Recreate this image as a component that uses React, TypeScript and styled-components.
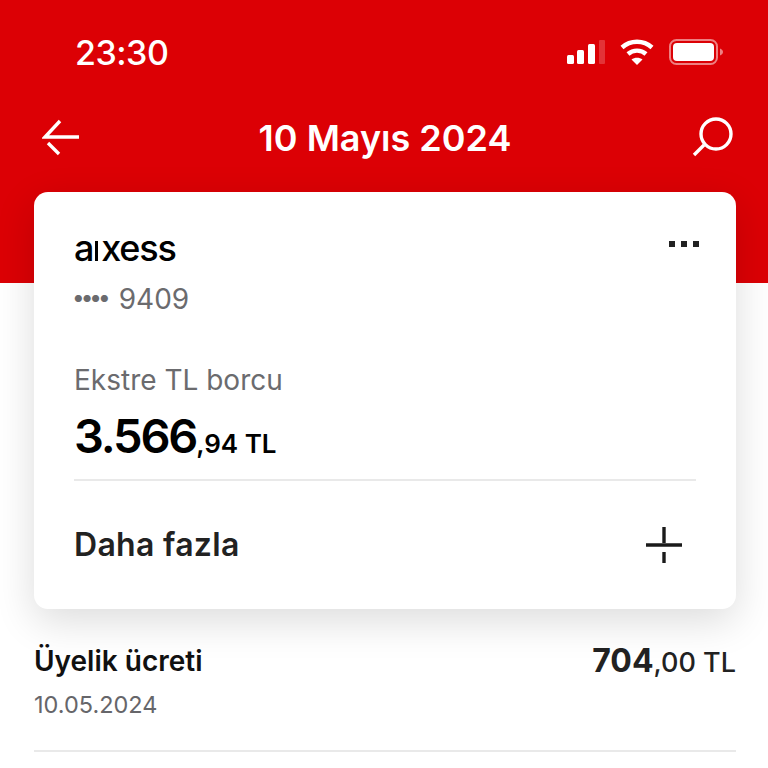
import React from 'react';
import styled, { createGlobalStyle } from "styled-components";

const GlobalStyle = createGlobalStyle`
    html, body {
        margin: 0;
        padding: 0;
        background: #fff;
        font-family: "Inter", "Liberation Sans", sans-serif;
    }
`

const Screen = styled.div`
    width: 768px;
    height: 768px;
    overflow: hidden;
    background: #fff;
`
const Header = styled.header`
    height: 283px;
    background: #dc0005;
    box-sizing: border-box;
    padding-top: 31px;
    color: #fff;
`
const StatusBar = styled.div`
    height: 42px;
    display: flex;
    align-items: center;
    justify-content: space-between;
    padding: 0 44px 0 75px;
`
const Time = styled.span`
    font-size: 34px;
    font-weight: 500;
    letter-spacing: -0.5px;
`
const StatusIcons = styled.div`
    display: flex;
    align-items: center;
    gap: 15px;
`
const NavBar = styled.nav`
    margin-top: 43px;
    height: 60px;
    display: flex;
    align-items: flex-start;
    justify-content: space-between;
    padding: 0 34px 0 42px;
`
const NavTitle = styled.h1`
    margin: 0 2px 0 0;
    font-size: 36px;
    font-weight: 600;
    line-height: 44px;
`
const Card = styled.section`
    position: relative;
    margin: -91px 32px 0 34px;
    height: 417px;
    box-sizing: border-box;
    padding: 40px 40px 0;
    background: #fff;
    border-radius: 14px;
    box-shadow: 0 12px 40px rgba(0, 0, 0, 0.14);
`
const CardTop = styled.div`
    display: flex;
    justify-content: space-between;
    align-items: flex-start;
`
const Logo = styled.span`
    display: flex;
    align-items: baseline;
    font-size: 36px;
    line-height: 32px;
    font-weight: 500;
    letter-spacing: -1.2px;
    color: #000;
`
const LogoBar = styled.i`
    width: 3px;
    height: 20px;
    margin: 0 3px 0 2px;
    background: #000;
`
const MoreDots = styled.div`
    display: flex;
    gap: 6px;
    margin: 9px -3px 0 0;
`
const Dot = styled.i`
    width: 6px;
    height: 6px;
    background: #222;
`
const CardNumber = styled.div`
    margin-top: 18px;
    display: flex;
    align-items: center;
    gap: 10px;
    font-size: 28px;
    line-height: 34px;
    color: #6b6b6e;
`
const Masks = styled.span`
    font-size: 9.5px;
    letter-spacing: 0;
`
const DebtLabel = styled.div`
    margin-top: 47px;
    font-size: 28px;
    line-height: 34px;
    color: #6b6b6e;
`
const DebtAmount = styled.div`
    margin: 11px 0 7px;
    font-size: 26px;
    font-weight: 600;
    line-height: 56px;
    color: #000;
`
const DebtWhole = styled.span`
    font-size: 47px;
    font-weight: 600;
    letter-spacing: -2.2px;
`
const Divider = styled.hr`
    margin: 0;
    border: 0;
    height: 2px;
    background: #e9e9e9;
`
const CardFoot = styled.div`
    height: 127px;
    display: flex;
    align-items: center;
    justify-content: space-between;
    box-sizing: border-box;
    margin-right: 14px;
`
const FootLabel = styled.span`
    font-size: 32px;
    font-weight: 600;
    letter-spacing: 0.3px;
    color: #222;
`
const Transaction = styled.div`
    margin: 32px 32px 0 34px;
    display: flex;
    justify-content: space-between;
    align-items: flex-start;
`
const TxTitle = styled.div`
    font-size: 28px;
    font-weight: 600;
    line-height: 40px;
    color: #111;
`
const TxDate = styled.div`
    margin-top: 4px;
    font-size: 23.5px;
    line-height: 40px;
    color: #66666a;
`
const TxAmount = styled.div`
    font-size: 27px;
    font-weight: 500;
    line-height: 40px;
    color: #222;
`
const TxWhole = styled.span`
    font-size: 32px;
    font-weight: 700;
`
const ListRule = styled.div`
    margin: 25px 32px 0 34px;
`

const SignalIcon = () => (
    <svg width="38" height="24" viewBox="0 0 38 24" fill="#fff">
        <rect x="0" y="15" width="7" height="9" rx="1.5"/>
        <rect x="10" y="10" width="7" height="14" rx="1.5"/>
        <rect x="21" y="4" width="7" height="20" rx="1.5"/>
        <rect x="32" y="0" width="6" height="24" rx="1" opacity="0.2"/>
    </svg>
)

const WifiIcon = () => (
    <svg width="34" height="28" viewBox="0 0 34 28" fill="none" stroke="#fff" strokeWidth="4.4">
        <path d="M2 9.5C10.5 1.8 23.5 1.8 32 9.5"/>
        <path d="M8 16C13 11.5 21 11.5 26 16"/>
        <path d="M17 27L11.5 21.5C14.5 19 19.5 19 22.5 21.5Z" fill="#fff" stroke="none"/>
    </svg>
)

const BatteryIcon = () => (
    <svg width="55" height="26" viewBox="0 0 55 26" fill="none">
        <rect x="1" y="1" width="47" height="24" rx="6.5" stroke="#fff" strokeOpacity="0.5" strokeWidth="2"/>
        <rect x="4" y="4" width="41" height="18" rx="4" fill="#fff"/>
        <path d="M51 9.5C53 10.3 54 11.5 54 13C54 14.5 53 15.7 51 16.5Z" fill="#fff" fillOpacity="0.5"/>
    </svg>
)

const BackIcon = () => (
    <svg width="38" height="40" viewBox="0 0 38 40" fill="none" stroke="#fff" strokeWidth="3.4">
        <path d="M18 5L3 21H37"/>
        <path d="M6 27L17 38"/>
    </svg>
)

const SearchIcon = () => (
    <svg width="42" height="42" viewBox="0 0 42 42" fill="none" stroke="#fff" strokeWidth="3.4">
        <circle cx="24" cy="18" r="15"/>
        <path d="M2 39L12 29"/>
    </svg>
)

const PlusIcon = () => (
    <svg width="36" height="36" viewBox="0 0 36 36" fill="none" stroke="#1a1a1a" strokeWidth="3.4">
        <path d="M0 18H36"/>
        <path d="M18 0V16"/>
        <path d="M18 25V36"/>
    </svg>
)

const App = () => {
    return (
        <Screen>
            <GlobalStyle/>
            <Header>
                <StatusBar>
                    <Time>23:30</Time>
                    <StatusIcons>
                        <SignalIcon/>
                        <WifiIcon/>
                        <BatteryIcon/>
                    </StatusIcons>
                </StatusBar>
                <NavBar>
                    <BackIcon/>
                    <NavTitle>10 Mayıs 2024</NavTitle>
                    <SearchIcon/>
                </NavBar>
            </Header>
            <Card>
                <CardTop>
                    <Logo>a<LogoBar/>xess</Logo>
                    <MoreDots>
                        <Dot/><Dot/><Dot/>
                    </MoreDots>
                </CardTop>
                <CardNumber>
                    <Masks>●●●●</Masks>
                    <span>9409</span>
                </CardNumber>
                <DebtLabel>Ekstre TL borcu</DebtLabel>
                <DebtAmount>
                    <DebtWhole>3.566</DebtWhole>,94 TL
                </DebtAmount>
                <Divider/>
                <CardFoot>
                    <FootLabel>Daha fazla</FootLabel>
                    <PlusIcon/>
                </CardFoot>
            </Card>
            <Transaction>
                <div>
                    <TxTitle>Üyelik ücreti</TxTitle>
                    <TxDate>10.05.2024</TxDate>
                </div>
                <TxAmount>
                    <TxWhole>704</TxWhole>,00 TL
                </TxAmount>
            </Transaction>
            <ListRule><Divider/></ListRule>
        </Screen>
    )
}

export default App
